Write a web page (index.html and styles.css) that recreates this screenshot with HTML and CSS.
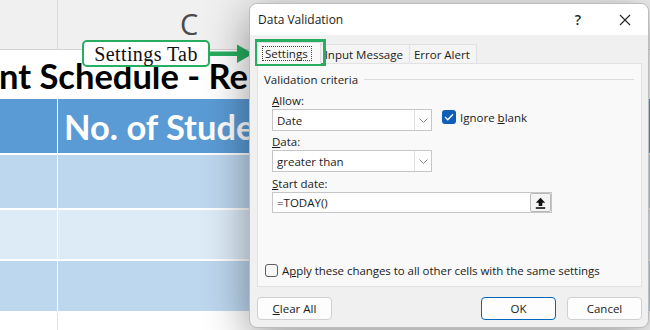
FILE: index.html
```html
<!DOCTYPE html>
<html lang="en">
<head>
<meta charset="utf-8">
<title>Data Validation</title>
<link rel="stylesheet" href="styles.css">
</head>
<body>
<div class="sheet">
  <div class="colhead">
    <div class="colhead-a"></div>
    <div class="colhead-c">C</div>
  </div>
  <div class="titlerow">nt Schedule - Re</div>
  <div class="row row-head">
    <div class="cell cell-a"></div>
    <div class="cell cell-b">No. of Stude</div>
  </div>
  <div class="row row-dark r1">
    <div class="cell cell-a"></div>
    <div class="cell cell-b"></div>
  </div>
  <div class="row row-light r2">
    <div class="cell cell-a"></div>
    <div class="cell cell-b"></div>
  </div>
  <div class="row row-dark r3">
    <div class="cell cell-a"></div>
    <div class="cell cell-b"></div>
  </div>
  <div class="row row-blank">
    <div class="cell cell-a"></div>
    <div class="cell cell-b"></div>
  </div>
</div>

<div class="callout">Settings Tab</div>
<svg class="callout-arrow" width="46" height="20" viewBox="0 0 46 20">
  <rect x="0" y="7.5" width="30" height="4.5" fill="#27ae60"/>
  <polygon points="28,0.5 44,9.75 28,19" fill="#27ae60"/>
</svg>

<div class="dialog">
  <div class="titlebar">
    <span class="title">Data Validation</span>
    <span class="tb-btn tb-help">?</span>
    <span class="tb-btn tb-close">
      <svg width="12" height="12" viewBox="0 0 12 12"><path d="M1 1 L11 11 M11 1 L1 11" stroke="#222" stroke-width="1.1" fill="none"/></svg>
    </span>
  </div>
  <div class="dbody">
    <div class="tabs">
      <div class="tab tab-active"><span class="focus">Settings</span></div>
      <div class="tab">Input Message</div>
      <div class="tab">Error Alert</div>
    </div>
    <div class="panel">
      <div class="group-title"><span>Validation criteria</span><span class="rule"></span></div>
      <div class="criteria">
        <div class="label lbl-allow"><u>A</u>llow:</div>
        <div class="field-line">
          <div class="select"><span class="select-text">Date</span><span class="select-arrow"><svg width="9" height="5" viewBox="0 0 9 5"><path d="M0.5 0.5 L4.5 4.5 L8.5 0.5" stroke="#8a8a8a" stroke-width="1" fill="none"/></svg></span></div>
          <div class="check check-ignore">
            <span class="box box-on"><svg width="10" height="8" viewBox="0 0 10 8"><path d="M1 4 L3.8 6.8 L9 1.2" stroke="#fff" stroke-width="1.3" fill="none"/></svg></span>
            <span>Ignore <u>b</u>lank</span>
          </div>
        </div>
        <div class="label lbl-data"><u>D</u>ata:</div>
        <div class="field-line">
          <div class="select"><span class="select-text">greater than</span><span class="select-arrow"><svg width="9" height="5" viewBox="0 0 9 5"><path d="M0.5 0.5 L4.5 4.5 L8.5 0.5" stroke="#8a8a8a" stroke-width="1" fill="none"/></svg></span></div>
        </div>
        <div class="label lbl-start"><u>S</u>tart date:</div>
        <div class="input">
          <span class="input-text">=TODAY()</span>
          <span class="ref-btn"><svg width="11" height="12" viewBox="0 0 11 12"><path d="M5.5 0.8 L10.2 5.8 L7.3 5.8 L7.3 9 L3.7 9 L3.7 5.8 L0.8 5.8 Z" fill="#111"/><rect x="0.8" y="10.2" width="9.4" height="1.6" fill="#111"/></svg></span>
        </div>
      </div>
      <div class="spacer"></div>
      <div class="check check-apply">
        <span class="box box-off"></span>
        <span>A<u>p</u>ply these changes to all other cells with the same settings</span>
      </div>
    </div>
    <div class="buttons">
      <div class="btn"><u>C</u>lear All</div>
      <div class="grow"></div>
      <div class="btn btn-primary">OK</div>
      <div class="btn">Cancel</div>
    </div>
  </div>
</div>
<div class="tab-highlight"></div>
</body>
</html>
```
FILE: styles.css
```css
* { box-sizing: border-box; }
body {
  margin: 0;
  width: 650px;
  height: 330px;
  overflow: hidden;
  position: relative;
  background: #ffffff;
  font-family: "Open Sans", "Noto Sans", sans-serif;
}

/* ---------- spreadsheet background ---------- */
.sheet { display: flex; flex-direction: column; }
.colhead {
  height: 50px;
  display: flex;
  background: #f0f0f0;
  border-bottom: 1px solid #d2d2d2;
}
.colhead-a { width: 58px; border-right: 1px solid #dcdcdc; }
.colhead-c {
  flex: 1;
  padding-left: 122px;
  padding-top: 6px;
  font-size: 29px;
  color: #4a4a4a;
  line-height: 36px;
}
.titlerow {
  height: 49px;
  display: flex;
  align-items: center;
  white-space: nowrap;
  font-family: Lato, "Open Sans", sans-serif;
  font-weight: 700;
  font-size: 34.5px;
  color: #000;
  margin-left: -1px;
  padding-top: 2px;
}
.row { display: flex; gap: 1px; margin-bottom: 2px; }
.cell-a { width: 57px; }
.cell-b { flex: 1; }
.row-head { height: 54px; background: #ffffff; }
.row-head .cell { background: #5b9bd5; }
.row-head .cell-b {
  display: flex;
  align-items: center;
  padding-left: 6px;
  font-family: Lato, "Open Sans", sans-serif;
  font-weight: 700;
  font-size: 34.5px;
  color: #ffffff;
  white-space: nowrap;
  overflow: hidden;
}
.row-dark .cell { background: #bdd7ee; }
.row-light .cell { background: #ddebf7; }
.r1 { height: 53px; }
.r2 { height: 49px; }
.r3 { height: 50px; }
.row-blank { height: 30px; margin-bottom: 0; background: #e2e2e2; }
.row-blank .cell { background: #ffffff; }

/* ---------- callout ---------- */
.callout {
  position: absolute;
  left: 82px;
  top: 40px;
  width: 128px;
  height: 27px;
  border: 2px solid #27ae60;
  border-radius: 5px;
  background: #ffffff;
  font-family: "Liberation Serif", serif;
  font-size: 20px;
  letter-spacing: 0.4px;
  color: #111;
  display: flex;
  align-items: center;
  justify-content: center;
  line-height: 1;
}
.callout-arrow { position: absolute; left: 209px; top: 44px; }

/* ---------- dialog ---------- */
.dialog {
  position: absolute;
  left: 249px;
  top: 3px;
  width: 400px;
  height: 325px;
  border: 1px solid #bcbcbc;
  border-radius: 8px;
  background: #f0f0f0;
  overflow: hidden;
  box-shadow: 0 10px 45px rgba(0, 0, 0, 0.42);
  display: flex;
  flex-direction: column;
  font-size: 11.5px;
  color: #1b1b1b;
}
.titlebar {
  height: 31px;
  background: #ffffff;
  display: flex;
  align-items: center;
  padding-left: 8px;
}
.title { flex: 1; font-size: 12px; }
.tb-btn {
  width: 46px;
  height: 31px;
  display: flex;
  align-items: center;
  justify-content: center;
}
.tb-help { font-size: 14px; font-weight: 600; color: #222; padding-right: 2px; }

.dbody {
  flex: 1;
  display: flex;
  flex-direction: column;
  padding: 9px 6px 6px 7px;
}
.tabs { display: flex; height: 19px; align-items: flex-end; }
.tab {
  height: 19px;
  padding: 0 6px 0 4px;
  display: flex;
  align-items: center;
  background: #f4f4f4;
  border: 1px solid #e0e0e0;
  border-bottom: none;
  margin-left: -1px;
  white-space: nowrap;
}
.tab-active {
  margin-left: 0;
  padding: 0 8px 0 4px;
  background: #f9f9f9;
  position: relative;
  z-index: 1;
  margin-bottom: -1px;
  height: 22px;
}
.focus {
  border: 1px dotted #444;
  padding: 0 3px 0 2px;
  line-height: 13px;
}
.panel {
  height: 224px;
  background: #f9f9f9;
  border: 1px solid #e2e2e2;
  padding: 7px 7px 8px 6px;
  display: flex;
  flex-direction: column;
}
.group-title {
  display: flex;
  align-items: center;
  gap: 6px;
  height: 16px;
}
.rule { flex: 1; height: 1px; background: #dcdcdc; }
.criteria { padding-left: 8px; display: flex; flex-direction: column; align-items: flex-start; }
.label { height: 16px; line-height: 16px; }
.lbl-allow { margin-top: 6px; }
.lbl-data { margin-top: 3px; }
.lbl-start { margin-top: 4px; }
.field-line { display: flex; align-items: flex-start; }
.select {
  width: 160px;
  height: 22px;
  background: #ffffff;
  border: 1px solid #c6c6c6;
  display: flex;
  align-items: center;
}
.select-text { flex: 1; padding-left: 4px; }
.select-arrow {
  width: 17px;
  height: 20px;
  border-left: 1px solid #e0e0e0;
  display: flex;
  align-items: center;
  justify-content: center;
}
.check { display: flex; align-items: center; gap: 4px; height: 16px; }
.check-ignore { margin-left: 10px; }
.box {
  width: 14px;
  height: 14px;
  border-radius: 3px;
  display: flex;
  align-items: center;
  justify-content: center;
}
.box-on { background: #0f5fb8; }
.box-off { width: 13px; height: 13px; border: 1px solid #5e5e5e; background: #f7f7f7; }
.input {
  width: 280px;
  height: 21px;
  background: #ffffff;
  border: 1px solid #c6c6c6;
  display: flex;
  align-items: center;
}
.input-text { flex: 1; padding-left: 4px; }
.ref-btn {
  width: 21px;
  height: 19px;
  background: #f4f4f4;
  border: 1px solid #b8b8b8;
  border-radius: 2px;
  display: flex;
  align-items: center;
  justify-content: center;
}
.spacer { flex: 1; }
.check-apply { gap: 4px; margin-left: 1px; letter-spacing: -0.05px; }

.buttons {
  display: flex;
  margin-top: 10px;
  height: 23px;
  gap: 11px;
}
.grow { flex: 1; }
.btn {
  width: 75px;
  height: 23px;
  background: #fdfdfd;
  border: 1px solid #d0d0d0;
  border-radius: 4px;
  display: flex;
  align-items: center;
  justify-content: center;
}
.btn-primary { border: 1.5px solid #0067c0; }

.tab-highlight {
  position: absolute;
  left: 255px;
  top: 39px;
  width: 71px;
  height: 27px;
  border: 3px solid #27ae60;
}
```
